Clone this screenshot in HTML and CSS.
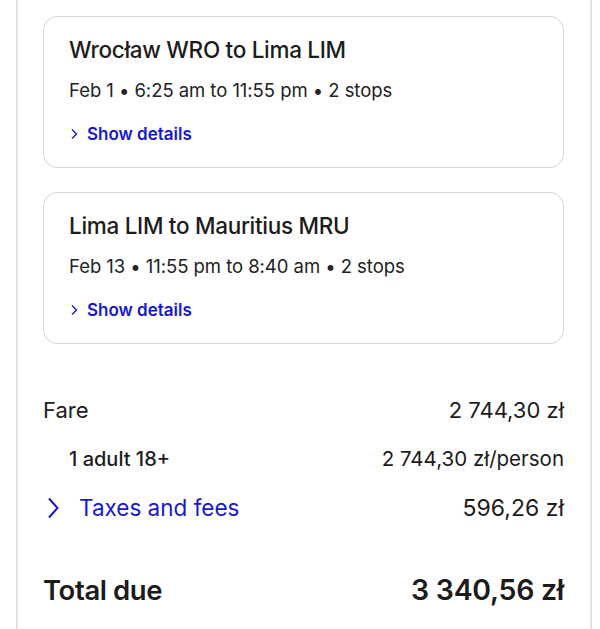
FILE: index.html
```html
<!doctype html>
<html>
<head>
<meta charset="utf-8">
<title>Trip summary</title>
<link rel="stylesheet" href="styles.css">
</head>
<body>
<div class="panel">
	<div class="leg">
		<h2>Wrocław WRO to Lima LIM</h2>
		<p class="when">Feb 1 • 6:25 am to 11:55 pm • 2 stops</p>
		<a class="details" href="#">
			<svg width="10" height="12" viewBox="0 0 10 12"><path d="M3 1.5l4.5 4.5L3 10.5" fill="none" stroke="currentColor" stroke-width="1.4"/></svg>
			Show details
		</a>
	</div>
	<div class="leg">
		<h2>Lima LIM to Mauritius MRU</h2>
		<p class="when">Feb 13 • 11:55 pm to 8:40 am • 2 stops</p>
		<a class="details" href="#">
			<svg width="10" height="12" viewBox="0 0 10 12"><path d="M3 1.5l4.5 4.5L3 10.5" fill="none" stroke="currentColor" stroke-width="1.4"/></svg>
			Show details
		</a>
	</div>

	<div class="prices">
		<div class="row">
			<span>Fare</span>
			<span>2 744,30 zł</span>
		</div>
		<div class="row sub">
			<span>1 adult 18+</span>
			<span>2 744,30 zł/person</span>
		</div>
		<div class="row">
			<a class="taxes" href="#">
				<svg width="16" height="24" viewBox="0 0 16 24"><path d="M4 2.5l8.5 9.5-8.5 9.5" fill="none" stroke="currentColor" stroke-width="2"/></svg>
				Taxes and fees
			</a>
			<span class="amount">596,26 zł</span>
		</div>
		<div class="row total">
			<span>Total due</span>
			<span class="amount">3 340,56 zł</span>
		</div>
	</div>
</div>
</body>
</html>
```
FILE: styles.css
```css
* {margin:0; padding:0; box-sizing:border-box; }
body {font-family:Inter,"Noto Sans",sans-serif; color:#1c1c1c; background:#fff; }
.panel {margin-left:16px; width:576px; min-height:629px; border-left:2px solid #e2e2e2; border-right:2px solid #e2e2e2; padding:16px 26px 0 25px; }
.leg {border:1px solid #d6d6d6; border-radius:14px; padding:19px 25px 21px; margin-bottom:24px; }
.leg h2 {font-size:22.5px; font-weight:500; line-height:27px; letter-spacing:-0.3px; }
.when {margin-top:14px; font-size:18.5px; line-height:26px; letter-spacing:-0.05px; color:#222; }
.details {display:flex; align-items:center; gap:8px; margin-top:19px; font-size:17px; font-weight:600; line-height:24px; color:#1717d2; text-decoration:none; }
.prices {padding-top:28px; }
.row {display:flex; justify-content:space-between; align-items:center; font-size:22px; line-height:28px; margin-bottom:21px; }
.row.sub {font-size:20.5px; padding-left:26px; }
.row.sub span:first-child {font-size:20px; font-weight:500; }
.taxes {display:flex; align-items:center; gap:18px; font-size:22.5px; color:#1717d2; text-decoration:none; padding-left:2px; }
.row .amount {font-size:23px; }
.row.total {margin-top:51px; font-size:27.5px; font-weight:600; line-height:34px; letter-spacing:-0.4px; }
.row.total .amount {font-size:28.5px; letter-spacing:-0.3px; }
```
